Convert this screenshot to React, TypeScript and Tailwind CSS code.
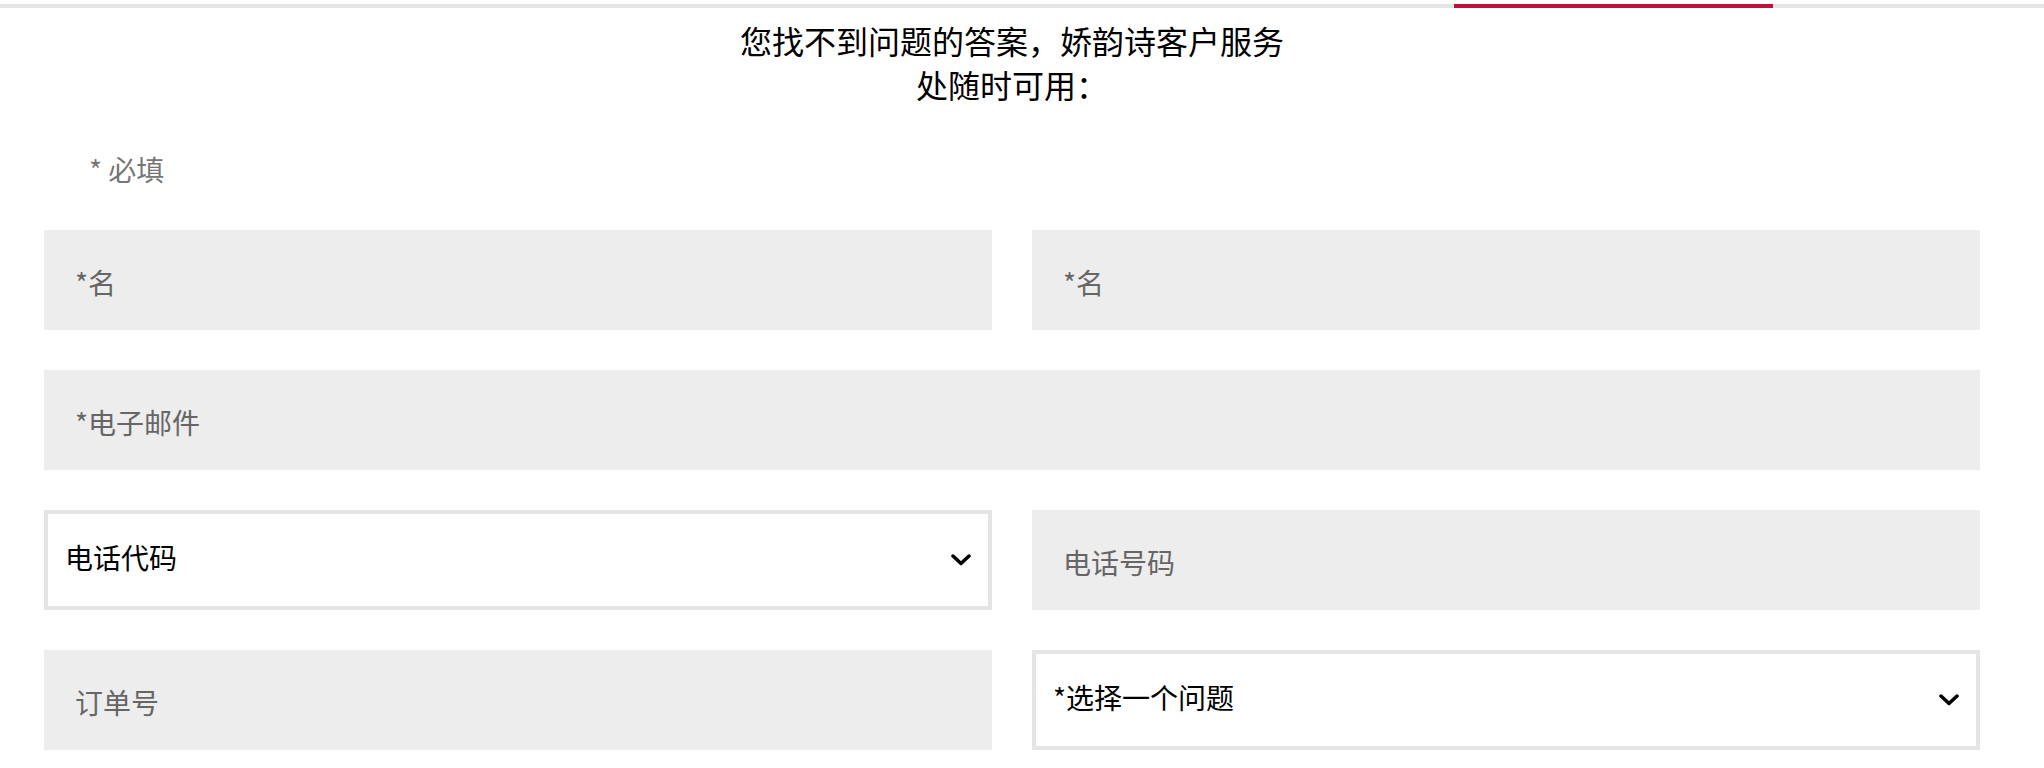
const font = {fontFamily: '"Noto Sans CJK SC", "Noto Sans", sans-serif'};

type FieldProps = {
  label: string;
  wide?: boolean;
};

const Chevron = () => (
  <svg className="w-5 h-3 shrink-0" viewBox="0 0 20 12" fill="none">
    <polyline points="2,2 10,9.5 18,2" stroke="black" strokeWidth="3.5" strokeLinecap="round" strokeLinejoin="round" />
  </svg>
);

const TextField: React.FC<FieldProps> = ({label, wide}) => (
  <div className={`flex items-center h-[100px] bg-[#ededed] pl-[31px] pt-1 ${wide ? "col-span-2" : ""}`}>
    <span className="text-[28px] leading-none text-[#666666]">{label}</span>
  </div>
);

const SelectField: React.FC<FieldProps> = ({label}) => (
  <div className="flex items-center justify-between h-[100px] bg-white border-4 border-[#e4e4e4] pl-[17px] pr-[17px]">
    <span className="text-[28px] leading-none text-black pb-[7px]">{label}</span>
    <Chevron />
  </div>
);

export default function App() {
  return (
    <div className="w-[2044px] h-[768px] bg-white overflow-hidden" style={font}>
      <div className="flex w-full h-1 mt-1 bg-[#e5e5e5]">
        <div className="ml-[1454px] w-[319px] h-full bg-[#c20f37]" />
      </div>

      <div className="pl-[44px] pr-[64px]">
        <h1 className="mt-[10px] text-center text-[32px] leading-[44px] text-black font-normal">
          您找不到问题的答案，娇韵诗客户服务
          <br />
          处随时可用：
        </h1>

        <p className="mt-[43px] pl-[45px] text-[28px] leading-[40px] text-[#767676]">* 必填</p>

        <div className="grid grid-cols-2 gap-x-10 gap-y-10 mt-[41px]">
          <TextField label="*名" />
          <TextField label="*名" />
          <TextField label="*电子邮件" wide />
          <SelectField label="电话代码" />
          <TextField label="电话号码" />
          <TextField label="订单号" />
          <SelectField label="*选择一个问题" />
        </div>
      </div>
    </div>
  );
}
